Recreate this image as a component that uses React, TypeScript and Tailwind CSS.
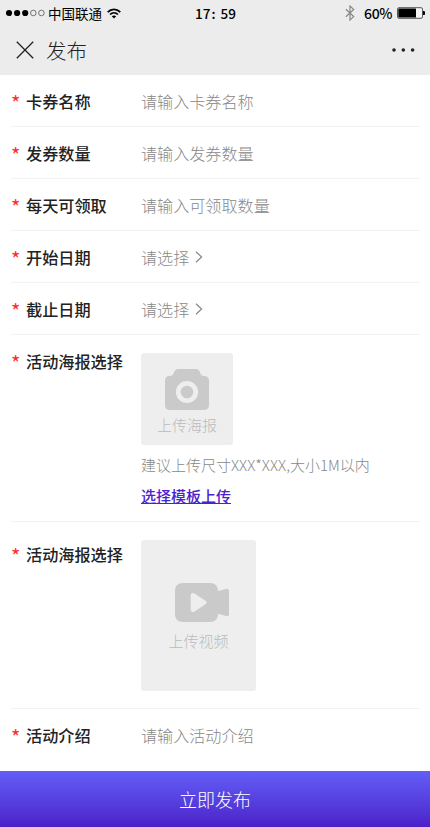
import type { ReactNode } from "react";

function StatusBar() {
  return (
    <div className="grid grid-cols-3 items-center h-[26px] pl-[6px] pr-[5px] text-black">
      <div className="flex items-center">
        <svg width="40" height="8" viewBox="0 0 40 8">
          <circle cx="3" cy="4" r="3.1" />
          <circle cx="11.1" cy="4" r="3.1" />
          <circle cx="19.2" cy="4" r="3.1" />
          <circle cx="27.3" cy="4" r="2.8" fill="none" stroke="#444" strokeWidth="0.7" />
          <circle cx="35.4" cy="4" r="2.8" fill="none" stroke="#444" strokeWidth="0.7" />
        </svg>
        <span className="ml-[2px] text-[13.5px] leading-[26px] whitespace-nowrap">中国联通</span>
        <svg className="ml-[5px] shrink-0" width="14" height="11" viewBox="0 0 14 11" fill="none" stroke="#000" strokeWidth="1.7">
          <path d="M0.7 4.1C4.3 0.4 9.7 0.4 13.3 4.1" />
          <path d="M3 6.5C5.3 4.2 8.7 4.2 11 6.5" />
          <path d="M7 10.5L4.8 8.2C6 7.1 8 7.1 9.2 8.2Z" fill="#000" stroke="none" />
        </svg>
      </div>
      <div className="flex justify-center text-[13.5px] leading-[26px] font-medium">
        <span>17</span>
        <span className="w-[10px] pl-[1px]">:</span>
        <span>59</span>
      </div>
      <div className="flex items-center justify-end">
        <svg width="10" height="16" viewBox="0 0 10 16" fill="none" stroke="#888" strokeWidth="1.2">
          <path d="M0.9 4.2L8.7 11.6L5 15V1L8.7 4.4L0.9 11.8" />
        </svg>
        <span className="ml-[9px] text-[14px] leading-[26px] font-medium tracking-[-0.4px]">60%</span>
        <svg className="ml-[5px]" width="28" height="12" viewBox="0 0 28 12">
          <rect x="0.5" y="0.7" width="25" height="10.6" rx="1.5" fill="#f4f4f4" stroke="#444" strokeWidth="0.9" />
          <rect x="1.3" y="1.5" width="17.7" height="9" rx="0.6" />
          <path d="M26 4h0.6a1.4 1.4 0 0 1 1.4 2a1.4 1.4 0 0 1 -1.4 2H26z" />
        </svg>
      </div>
    </div>
  );
}

function NavBar() {
  return (
    <div className="flex items-center h-12 pl-4 pr-[15px]">
      <svg width="18" height="18" viewBox="0 0 18 18" stroke="#222" strokeWidth="1.3">
        <path d="M0.8 0.8L17.2 17.2M17.2 0.8L0.8 17.2" />
      </svg>
      <h1 className="ml-3 text-[20.5px] leading-none font-light text-[#222]">发布</h1>
      <svg className="ml-auto" width="23" height="4" viewBox="0 0 23 4" fill="#222">
        <circle cx="2" cy="2" r="1.8" />
        <circle cx="11.3" cy="2" r="1.8" />
        <circle cx="20.6" cy="2" r="1.8" />
      </svg>
    </div>
  );
}

type FieldProps = {
  label: string;
  className?: string;
  children: ReactNode;
};

function Field({ label, className = "h-[52px] pt-[14px]", children }: FieldProps) {
  return (
    <div className={`flex items-start border-b border-[#f3f3f3] ${className}`}>
      <div className="flex w-[130px] shrink-0 leading-6">
        <span className="w-[15px] text-[20px] text-[#ff2a2a] pt-[2px]">*</span>
        <span className="text-[16.15px] font-medium text-[#222] whitespace-nowrap">{label}</span>
      </div>
      {children}
    </div>
  );
}

function Placeholder({ children }: { children: ReactNode }) {
  return <span className="text-[16.1px] leading-6 font-light text-[#888]">{children}</span>;
}

function SelectValue() {
  return (
    <button className="flex items-center">
      <Placeholder>请选择</Placeholder>
      <svg className="ml-[6px]" width="8" height="12" viewBox="0 0 8 12" fill="none" stroke="#888" strokeWidth="1.2">
        <path d="M1 0.8L6.6 6L1 11.2" />
      </svg>
    </button>
  );
}

function CameraIcon() {
  return (
    <svg width="44" height="41" viewBox="0 0 44 41">
      <path
        fill="#cacaca"
        d="M13.5 0H30.5C33.5 0 34.2 1.5 35.2 4C36 6 37 7 39 7C42.5 7 44 8.7 44 12V36C44 39.3 42.3 41 39 41H5C1.7 41 0 39.3 0 36V12C0 8.7 1.5 7 5 7C7 7 8 6 8.8 4C9.8 1.5 10.5 0 13.5 0Z"
      />
      <circle cx="22" cy="23" r="8.7" fill="none" stroke="#eee" strokeWidth="4.8" />
    </svg>
  );
}

function VideoIcon() {
  return (
    <svg width="54" height="39" viewBox="0 0 54 39">
      <path
        fill="#cacaca"
        d="M8 0H35C40 0 43 3 43 8L51 5.9C53 5.5 54 6.4 54 8V31C54 32.7 53 33.5 51 33L43 30.8C43 36 40 39 35 39H8C3 39 0 36 0 31V8C0 3 3 0 8 0Z"
      />
      <path
        fill="#eee"
        d="M15.7 12.5C15.7 10.3 17.6 9.2 19.5 10.6L30.5 17.7C32 18.8 32 20.2 30.5 21.3L19.5 28.4C17.6 29.8 15.7 28.7 15.7 26.5Z"
      />
    </svg>
  );
}

export default function App() {
  return (
    <div className="flex flex-col w-[430px] h-[827px] bg-white overflow-hidden font-['Noto_Sans_CJK_SC',sans-serif]">
      <header className="h-[75px] bg-[#ececec]">
        <StatusBar />
        <NavBar />
      </header>

      <main className="flex-1 pl-[11px] pr-[10px]">
        <Field label="卡券名称">
          <Placeholder>请输入卡券名称</Placeholder>
        </Field>
        <Field label="发券数量">
          <Placeholder>请输入发券数量</Placeholder>
        </Field>
        <Field label="每天可领取">
          <Placeholder>请输入可领取数量</Placeholder>
        </Field>
        <Field label="开始日期">
          <SelectValue />
        </Field>
        <Field label="截止日期">
          <SelectValue />
        </Field>

        <Field label="活动海报选择" className="h-[187px] pt-[14px]">
          <div className="flex flex-col items-start">
            <button className="flex flex-col items-center w-[92px] h-[92px] mt-[4px] pt-[16px] rounded-[3px] bg-[#eee]">
              <CameraIcon />
              <span className="mt-[3px] text-[15px] leading-6 font-light text-[#bbb]">上传海报</span>
            </button>
            <p className="mt-[8px] text-[15px] leading-6 font-light text-[#888] whitespace-nowrap">
              建议上传尺寸XXX*XXX,大小1M以内
            </p>
            <a href="#" className="mt-[7px] text-[15px] leading-6 font-medium text-[#4a22cc] underline">
              选择模板上传
            </a>
          </div>
        </Field>

        <Field label="活动海报选择" className="h-[187px] pt-[20px]">
          <button className="flex flex-col items-center w-[115px] h-[151px] -mt-[2px] pt-[43px] rounded-[3px] bg-[#eee]">
            <span className="ml-[6px]">
              <VideoIcon />
            </span>
            <span className="mt-[7px] text-[15px] leading-6 font-light text-[#bbb]">上传视频</span>
          </button>
        </Field>

        <Field label="活动介绍" className="h-[62px] pt-[14px] border-b-0">
          <Placeholder>请输入活动介绍</Placeholder>
        </Field>
      </main>

      <button className="h-14 shrink-0 bg-linear-to-b from-[#625ef8] to-[#4c1fc9] text-[18px] font-light text-white">
        立即发布
      </button>
    </div>
  );
}
